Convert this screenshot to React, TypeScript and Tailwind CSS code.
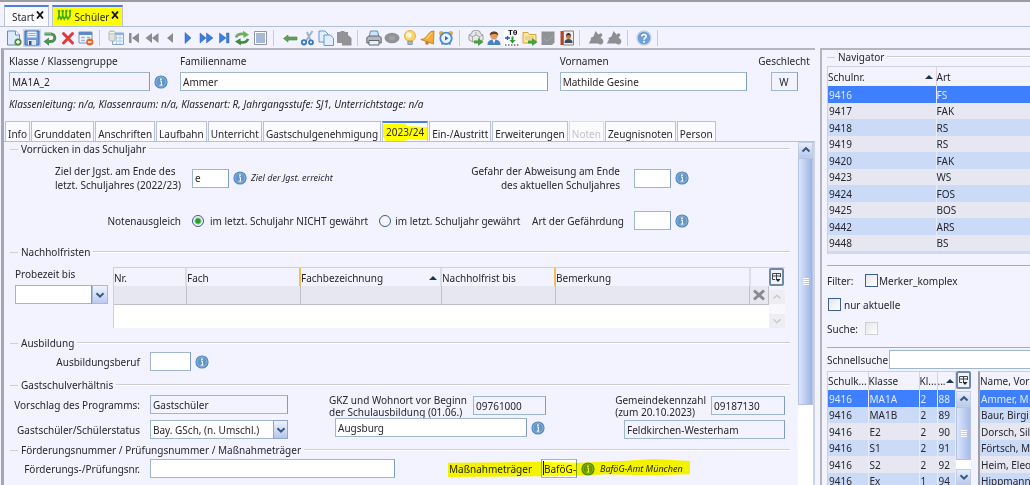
import React, { useState } from "react";

const field =
  "h-[19px] min-w-0 border border-[#9fb6d3] border-r-[#7f9cc0] px-0.5 text-[10px] leading-[14px] text-[#26262e] outline-none";

/* ---------- small shared pieces ---------- */

function InfoIcon() {
  return (
    <svg viewBox="0 0 14 14" className="size-3.5 shrink-0" aria-hidden="true">
      <circle cx="7" cy="7" r="6.6" fill="#4f86bd" />
      <circle cx="7" cy="7" r="5" fill="#6295c8" stroke="#9cc0e0" strokeWidth=".8" />
      <circle cx="7" cy="4.2" r=".9" fill="#fff" />
      <path d="M6 6h1.4v4M5.6 10.1h2.900" stroke="#fff" strokeWidth="1" fill="none" />
    </svg>
  );
}

function Chevron({ up = false, pale = false }: { up?: boolean; pale?: boolean }) {
  return (
    <svg viewBox="0 0 10 8" className="h-2 w-2.5" aria-hidden="true">
      <path
        d={up ? "M1.5 5.5 5 2.2l3.5 3.3" : "M1.5 2.2 5 5.6l3.5-3.4"}
        fill="none"
        stroke={pale ? "#c4c4cc" : "#3c5682"}
        strokeWidth={pale ? 1.2 : 2}
      />
    </svg>
  );
}

function ScrollButton({ up = false, pale = false, label }: { up?: boolean; pale?: boolean; label: string }) {
  return (
    <button
      type="button"
      aria-label={label}
      className={
        pale
          ? "flex h-3.5 w-full shrink-0 items-center justify-center bg-[#ededf2]"
          : "flex h-4 w-full shrink-0 items-center justify-center border border-[#c3cde4] bg-linear-to-b from-[#e6edfc] to-[#b9c9ee]"
      }
    >
      <Chevron up={up} pale={pale} />
    </button>
  );
}

function Grip() {
  return (
    <span className="flex w-1.5 flex-col gap-px">
      <i className="h-px bg-white" />
      <i className="h-px bg-white" />
      <i className="h-px bg-white" />
      <i className="h-px bg-white" />
    </span>
  );
}

function ColumnButton() {
  return (
    <button
      type="button"
      aria-label="Spalten wählen"
      className="flex h-[18px] w-[15px] shrink-0 items-center justify-center rounded-xs border-2 border-[#7187a6] bg-[#f1f3fb]"
    >
      <svg viewBox="0 0 11 11" className="size-[11px] shrink-0" aria-hidden="true">
        <path d="M4 7.500H1.500v-6h8V5M1.500 4h8M5.500 1.500V7" fill="none" stroke="#444" />
        <path d="M4.500 7h5L7 10z" fill="#222" />
      </svg>
    </button>
  );
}

function SortMark() {
  return (
    <svg viewBox="0 0 8 4" className="h-1 w-2 shrink-0" aria-hidden="true">
      <path d="M4 0l4 4H0z" fill="#1c3650" />
    </svg>
  );
}

function Legend({ children }: { children: React.ReactNode }) {
  return (
    <h2 className="flex h-3.5 items-center gap-[3px] whitespace-nowrap">
      <span className="h-px w-2 bg-[#cdced8]" />
      {children}
      <span className="h-0.5 flex-1 border-b border-white bg-[#cdced8]" />
    </h2>
  );
}

/* ---------- toolbar ---------- */

const icons: Record<string, React.ReactNode> = {
  Neu: (
    <>
      <path d="M1.500 1h8l4 4v10h-12z" fill="#dcebfa" stroke="#5b8fc9" />
      <path d="M9.500 1v4h4" fill="#fff" stroke="#5b8fc9" />
      <circle cx="12" cy="12" r="3.600" fill="#4d8f3c" />
      <path d="M12 10v4M10 12h4" stroke="#fff" strokeWidth="1.300" />
    </>
  ),
  Speichern: (
    <>
      <path d="M1 1h14v14H1z" fill="#6f9bd6" stroke="#41679e" />
      <path d="M3.500 1.500h9v6h-9z" fill="#e9f2fc" />
      <path d="M4.500 3.500h7M4.500 5.500h7" stroke="#8fb0da" />
      <path d="M4 10h8v5H4z" fill="#dfe5ee" />
      <path d="M5 11h2.500v4H5z" fill="#38587f" />
    </>
  ),
  Rückgängig: (
    <>
      <path d="M2.500 4h6.500a3.800 3.800 0 010 7.600H6" fill="none" stroke="#4e9152" strokeWidth="3" />
      <path d="M7 7.500v8.200L1.500 11.600z" fill="#4e9152" />
      <path d="M3 3.700h6" stroke="#8cc48c" />
    </>
  ),
  Löschen: <path d="M3.500 3.500l9 9.500M12.500 3.500L3.500 13" stroke="#e0393b" strokeWidth="3" strokeLinecap="round" />,
  "Zeile entfernen": (
    <>
      <path d="M1 2h13v11H1z" fill="#f4f8fe" stroke="#7690bb" />
      <path d="M1 2h13v3H1z" fill="#5f88c6" />
      <path d="M3 7.500h4M9 7.500h3M3 10.500h4" stroke="#9fb4d6" strokeWidth="1.500" />
      <circle cx="11.800" cy="12" r="3.600" fill="#e2672c" />
      <path d="M10 12h3.600" stroke="#fff" strokeWidth="1.400" />
    </>
  ),
  Abfrage: (
    <>
      <path d="M4.500 3h11v11.500h-11z" fill="#eef5fd" stroke="#7fa5d3" />
      <path d="M4.500 3h11v2h-11z" fill="#8fb4e0" />
      <path d="M4.500 8h11M4.500 11h11M8.500 5v9M12 5v9" stroke="#b5cdea" />
      <path d="M1 2.500C1 .5 7 .5 7 2.500v7c0 2-6 2-6 0z" fill="#e3e3dd" stroke="#aaaaa4" strokeWidth=".8" />
      <ellipse cx="4" cy="2.600" rx="3" ry="1.300" fill="#f5f5f0" stroke="#aaaaa4" strokeWidth=".6" />
    </>
  ),
  Erster: <path d="M3 3h2.500v10H3zM13 3v10L6 8z" fill="#8c8c90" />,
  "Schnell zurück": <path d="M8 3v10L1.500 8zM14.500 3v10L8 8z" fill="#8c8c90" />,
  Zurück: <path d="M11 3v10L5 8z" fill="#8c8c90" />,
  Weiter: <path d="M5 2.500v11L11 8z" fill="#3c7fdc" stroke="#2c62b8" strokeWidth=".5" />,
  "Schnell weiter": <path d="M2 3v10l6-5zM8.500 3v10L15 8z" fill="#3c7fdc" stroke="#2c62b8" strokeWidth=".5" />,
  Letzter: <path d="M3.500 3v10l6.500-5zM10.500 3H13v10h-2.500z" fill="#3c7fdc" stroke="#2c62b8" strokeWidth=".5" />,
  Aktualisieren: (
    <>
      <path d="M2 7.500C3 4.500 6 3.500 10 4" fill="none" stroke="#6bb05c" strokeWidth="2.600" />
      <path d="M9 .8l6 4L9.500 8z" fill="#6bb05c" />
      <path d="M14 8.800c-1 3-4.500 4-8 3.500" fill="none" stroke="#3f8a3c" strokeWidth="2.600" />
      <path d="M7 15.500l-6-4L6.500 8.200z" fill="#3f8a3c" />
    </>
  ),
  Liste: (
    <>
      <path d="M2.500 1.500h12v13h-12z" fill="#fff" stroke="#9296a2" />
      <path d="M4 4h9M4 6h9M4 8h9M4 10h9M4 12h9" stroke="#4f73ae" />
    </>
  ),
  "Zurück zur Liste": (
    <path d="M1.500 8.500L6 5v2h9v3H6v2z" fill="#62a455" stroke="#3f8339" strokeWidth=".6" />
  ),
  Ausschneiden: (
    <>
      <path d="M12.500 1L6 11M7 2l3.500 8.500" stroke="#9bb4d4" strokeWidth="2" />
      <circle cx="4" cy="12.300" r="2.200" fill="none" stroke="#3b78c0" strokeWidth="1.800" />
      <circle cx="11" cy="12.300" r="2" fill="none" stroke="#3b78c0" strokeWidth="1.800" />
    </>
  ),
  Kopieren: (
    <>
      <path d="M1 1h6l3 3v8H1z" fill="#e3effc" stroke="#6298d6" />
      <path d="M6 5h6l3.500 3v7.500H6z" fill="#e3effc" stroke="#6298d6" />
    </>
  ),
  Einfügen: <path d="M1 2h3l1-1h3l1 1h3v3l3.500 3v7.500H6V13H1z" fill="#939397" />,
  Drucken: (
    <>
      <path d="M4.500 1h7l1.500 6H3z" fill="#cfe4fb" stroke="#5f90cc" />
      <path d="M.8 7.500L3 6h10l2.200 1.500V13H.8z" fill="#b3b7c0" stroke="#62666f" />
      <path d="M3 10.500h10V15H3z" fill="#e6f1fd" stroke="#62666f" />
    </>
  ),
  Vorschau: (
    <>
      <ellipse cx="8" cy="8" rx="7.500" ry="5.200" fill="#929296" />
      <ellipse cx="8" cy="8" rx="3" ry="2.300" fill="#a2a2a6" />
    </>
  ),
  Hinweis: (
    <>
      <circle cx="8" cy="6" r="5.500" fill="#fbd568" stroke="#eab04a" />
      <circle cx="6.800" cy="5" r="2.800" fill="#fff6d8" />
      <path d="M5.800 11h4.500v3.500H5.800z" fill="#a9b4c4" stroke="#6f7a8c" strokeWidth=".6" />
    </>
  ),
  Glocke: (
    <>
      <path d="M14 1l-.5 13L.8 9.500C5 9 6 7 8 4.500 9.500 2.500 11 1 14 1z" fill="#efb13c" stroke="#b9771c" strokeWidth=".8" />
      <path d="M12 3c-2 .5-3.500 3-5 6" stroke="#fbdc8e" fill="none" />
      <circle cx="7" cy="13" r="1.800" fill="#c07f22" />
    </>
  ),
  Wiedervorlage: (
    <>
      <path d="M3.500 14.500l2-2M12.500 14.500l-2-2" stroke="#4678b4" strokeWidth="1.600" />
      <circle cx="3.300" cy="3.300" r="2.300" fill="#e8ad3b" />
      <circle cx="12.700" cy="3.300" r="2.300" fill="#e8ad3b" />
      <circle cx="8" cy="8.300" r="5.700" fill="#e9f4ff" stroke="#4b8bcf" strokeWidth="1.800" />
      <path d="M7 6v4.600l3.500-2.300z" fill="#2e69a9" />
    </>
  ),
  "Daten übergeben": (
    <>
      <path d="M1 5l3-2V1.500L8 0l4 1.500V3l3 2v5l-4 2-3-1-3 1-4-2z" fill="#e8e8ea" stroke="#8d8d91" strokeWidth=".8" />
      <path d="M1 5l3.500 1.500L8 5l3.500 1.500L15 5M4.500 6.500V12M8 2v3M11.500 6.500V12" fill="none" stroke="#8d8d91" strokeWidth=".7" />
      <path d="M6 10.500h4V8l5.500 4-5.500 4v-2.500H6z" fill="#4c9f3f" />
    </>
  ),
  Person: (
    <>
      <path d="M1.500 15c0-4 2.500-5.500 6.500-5.500s6.500 1.500 6.500 5.500z" fill="#4b82c2" />
      <path d="M6.500 9.500h3L8 13.500z" fill="#fff" />
      <circle cx="8" cy="5.500" r="3.800" fill="#d99a6a" />
      <path d="M3.800 5.500C3 0 13 0 12.200 5.500 10.500 3.500 6 3.500 3.800 5.500z" fill="#6e3c1e" />
    </>
  ),
  Folder: (
    <>
      <path d="M1 2.500h5l1.500 2H14V13H1z" fill="#fbe6a2" stroke="#d5a437" />
      <path d="M3 7h9M3 9h9" stroke="#e6c364" />
      <path d="M6 10.500h4V8l5.500 4-5.500 4v-2.500H6z" fill="#4c9f3f" />
    </>
  ),
  Notiz: (
    <>
      <path d="M1.500 1.500h13v11l-2.500 2.500H1.500z" fill="#929296" />
      <path d="M4 9l3 2 6-5" stroke="#a6a6aa" fill="none" />
    </>
  ),
  Adressbuch: (
    <>
      <path d="M2.500 1h3v14h-3z" fill="#b3442e" />
      <path d="M5.500 1h10v14h-10z" fill="#f0eeea" stroke="#8a8078" />
      <path d="M6.500 13c0-3 1.500-4 4-4s4 1 4 4z" fill="#3e4c60" />
      <circle cx="10.500" cy="6.500" r="2.500" fill="#b87850" />
      <path d="M8 6c0-4 5-4 5 0-1.500-1.500-3.500-1.500-5 0z" fill="#3b2618" />
    </>
  ),
  Formen: (
    <path
      d="M7.500 1l3 3.500L13 3l1.500 2-2 3c2 .5 3 2 2.800 4-.3 2.500-3.500 3.500-5.300 1.500H.8L3 9.500 2.500 8l3-1.500z"
      fill="#8f8f93"
    />
  ),
  Hilfe: (
    <>
      <circle cx="8" cy="8" r="7" fill="#6e9fd6" stroke="#c3d1e4" strokeWidth="1.400" />
      <path d="M5.800 6.500C6 3.800 10.300 4 10.200 6.500 10.100 8 8 8 8 9.700" fill="none" stroke="#fff" strokeWidth="1.600" />
      <circle cx="8" cy="11.700" r="1" fill="#fff" />
    </>
  ),
};

function ToolIcon({ name }: { name: string }) {
  if (name === "T0") {
    return (
      <span className="relative block size-4 bg-white">
        <span className="absolute -top-0.5 left-1 font-['Liberation_Mono',monospace] text-[8px] leading-[9px] font-bold text-black">
          T0
        </span>
        <svg viewBox="0 0 16 16" className="size-4" aria-hidden="true">
          <path d="M1 8h5M3.500 6v4" stroke="#2557c8" strokeWidth="1.400" />
          <path d="M7.500 6.500v3.500H5.500L8.500 13.500 11.500 10h-2V6.500z" fill="#2c9b36" />
          <path d="M1 15h14" stroke="#222" strokeDasharray="1.500 1.500" />
        </svg>
      </span>
    );
  }
  return (
    <svg viewBox="0 0 16 16" className="size-4" aria-hidden="true">
      {icons[name]}
    </svg>
  );
}

const toolGroups: string[][] = [
  ["Neu", "Speichern", "Rückgängig", "Löschen", "Zeile entfernen"],
  ["Abfrage", "Erster", "Schnell zurück", "Zurück", "Weiter", "Schnell weiter", "Letzter", "Aktualisieren", "Liste"],
  ["Zurück zur Liste", "Ausschneiden", "Kopieren", "Einfügen"],
  ["Drucken", "Vorschau", "Hinweis", "Glocke", "Wiedervorlage"],
  ["Daten übergeben", "Person", "T0", "Folder", "Notiz", "Adressbuch"],
  ["Formen", "Formen"],
  ["Hilfe"],
];

function Toolbar() {
  return (
    <div role="toolbar" className="flex h-[21px] shrink-0 items-center pl-[5px]">
      {toolGroups.map((group, g) => (
        <React.Fragment key={g}>
          {group.map((name, i) => (
            <button
              key={i}
              type="button"
              aria-label={name}
              className={
                name === "Speichern"
                  ? "flex h-[18px] w-[18px] items-center justify-center bg-[#c9d8f2]"
                  : "flex h-[18px] w-[18px] items-center justify-center"
              }
            >
              <ToolIcon name={name} />
            </button>
          ))}
          <span className="mr-[7px] ml-1 h-4 w-px bg-[#c9cad6]" />
        </React.Fragment>
      ))}
    </div>
  );
}

/* ---------- window tabs ---------- */

function CloseMark() {
  return (
    <svg viewBox="0 0 8 8" className="mb-1 size-2" aria-hidden="true">
      <path d="M1 .5l6 7M7 .5l-6 7" stroke="#111" strokeWidth="1.800" />
    </svg>
  );
}

function WindowTabs() {
  return (
    <div className="flex h-[22px] shrink-0 items-end gap-[3px] border-b border-[#b3c0da] pl-1">
      <div className="flex h-[21px] items-center gap-0.5 border-x border-t-2 border-x-[#b9c4da] border-t-[#4a7fdc] bg-[#fbfbff] pr-1 pl-[7px]">
        <button type="button">Start</button>
        <button type="button" aria-label="Start schließen">
          <CloseMark />
        </button>
      </div>
      <div className="flex h-[21px] items-center gap-0.5 border-x border-t-2 border-x-[#b9c4da] border-t-[#4a7fdc] bg-[#ff0] pr-[3px] pl-1">
        <svg viewBox="0 0 15 12" className="mb-1 h-3 w-[15px]" aria-hidden="true">
          <path
            d="M2 3v4.500L.8 10.500M2.300 7l1.700 3 1.700-3V3M5.700 7l1.600 3 1.900-3V3M9.200 7l1.600 3L13 7V3"
            fill="none"
            stroke="#3cae1c"
            strokeWidth="1.700"
          />
          <g fill="#3cae1c">
            <circle cx="2" cy="2" r="1.300" />
            <circle cx="5.700" cy="2" r="1.300" />
            <circle cx="9.300" cy="2" r="1.300" />
            <circle cx="13" cy="2" r="1.300" />
          </g>
        </svg>
        <button type="button">Schüler</button>
        <button type="button" aria-label="Schüler schließen">
          <CloseMark />
        </button>
      </div>
    </div>
  );
}

/* ---------- pupil header ---------- */

function PupilHeader() {
  return (
    <div className="px-[5px] pt-1">
      <div className="flex items-end">
        <div className="flex w-[141px] flex-col gap-1">
          <label htmlFor="klasse">Klasse / Klassengruppe</label>
          <input id="klasse" readOnly defaultValue="MA1A_2" className={`${field} bg-[#f3f3ff]`} />
        </div>
        <span className="mx-1 mb-0.5">
          <InfoIcon />
        </span>
        <div className="ml-2 flex min-w-0 flex-[367] flex-col gap-1">
          <label htmlFor="nachname">Familienname</label>
          <input id="nachname" defaultValue="Ammer" className={`${field} bg-white`} />
        </div>
        <div className="ml-3 flex min-w-0 flex-[187] flex-col gap-1">
          <label htmlFor="vornamen">Vornamen</label>
          <input id="vornamen" defaultValue="Mathilde Gesine" className={`${field} bg-white`} />
        </div>
        <div className="mr-px ml-3 flex w-[50px] flex-col items-center gap-1">
          <label htmlFor="geschlecht">Geschlecht</label>
          <input id="geschlecht" readOnly defaultValue="W" className={`${field} w-[27px] bg-[#f3f3ff] text-center`} />
        </div>
      </div>
      <p className="mt-1.5 italic">
        Klassenleitung: n/a, Klassenraum: n/a, Klassenart: R, Jahrgangsstufe: SJ1, Unterrichtstage: n/a
      </p>
    </div>
  );
}

const tabs = [
  "Info",
  "Grunddaten",
  "Anschriften",
  "Laufbahn",
  "Unterricht",
  "Gastschulgenehmigung",
  "2023/24",
  "Ein-/Austritt",
  "Erweiterungen",
  "Noten",
  "Zeugnisnoten",
  "Person",
];

function DetailTabs() {
  return (
    <div role="tablist" className="mt-2.5 flex h-[21px] gap-px border-b border-[#b3c0da] pl-px whitespace-nowrap">
      {tabs.map((t) =>
        t === "2023/24" ? (
          <button
            key={t}
            type="button"
            role="tab"
            aria-selected="true"
            className="relative border-x border-t-2 border-x-[#c3cbe0] border-t-[#4a7fdc] bg-[#fbfbff] px-[3px]"
          >
            <svg viewBox="0 0 44 18" preserveAspectRatio="none" className="absolute inset-0 size-full" aria-hidden="true">
              <path d="M0 1L22 0 24 3 44 4V17L26 16 22 18H3L0 14z" fill="#ff0" />
            </svg>
            <span className="relative">{t}</span>
          </button>
        ) : (
          <button
            key={t}
            type="button"
            role="tab"
            disabled={t === "Noten"}
            className="border border-b-0 border-[#b7c2d9] bg-[#fbfbff] px-0.5 pt-1 disabled:border-[#dcdfeb] disabled:text-[#c2c2cc]"
          >
            {t}
          </button>
        ),
      )}
    </div>
  );
}

/* ---------- year form ---------- */

function Radio({ id, checked, onChange }: { id: string; checked: boolean; onChange: () => void }) {
  return (
    <input
      type="radio"
      name="ausgleich"
      id={id}
      checked={checked}
      onChange={onChange}
      className="size-3 shrink-0 appearance-none rounded-full border border-[#3b5a8c] bg-[#f4f5f8] checked:bg-[radial-gradient(circle,#1fa01f_0_2px,#f4f5f8_4px)]"
    />
  );
}

function ProgressSection() {
  const [granted, setGranted] = useState(false);
  return (
    <section>
      <Legend>Vorrücken in das Schuljahr</Legend>
      <div className="mt-2 flex h-7 items-center">
        <div className="flex w-[171px] shrink-0 justify-end">
          <label htmlFor="ziel">
            Ziel der Jgst. am Ende des
            <br />
            letzt. Schuljahres (2022/23)
          </label>
        </div>
        <input id="ziel" defaultValue="e" className={`${field} mr-1 ml-[11px] w-[37px] bg-white`} />
        <InfoIcon />
        <em className="ml-1 text-[9px]">Ziel der Jgst. erreicht</em>
        <label htmlFor="gefahr" className="mr-3.5 ml-auto text-right">
          Gefahr der Abweisung am Ende
          <br />
          des aktuellen Schuljahres
        </label>
        <input id="gefahr" className={`${field} mr-1 w-[37px] bg-white`} />
        <span className="mr-[101px]">
          <InfoIcon />
        </span>
      </div>
      <div className="mt-[19px] flex h-[19px] items-center">
        <span className="w-[171px] shrink-0 text-right">Notenausgleich</span>
        <span className="ml-[11px] flex items-center gap-1.5">
          <Radio id="nichtGewaehrt" checked={!granted} onChange={() => setGranted(false)} />
          <label htmlFor="nichtGewaehrt">im letzt. Schuljahr NICHT gewährt</label>
        </span>
        <span className="ml-[11px] flex items-center gap-1">
          <Radio id="gewaehrt" checked={granted} onChange={() => setGranted(true)} />
          <label htmlFor="gewaehrt">im letzt. Schuljahr gewährt</label>
        </span>
        <label htmlFor="art" className="mr-2.5 ml-auto">
          Art der Gefährdung
        </label>
        <input id="art" className={`${field} mr-1 w-[37px] bg-white`} />
        <span className="mr-[101px]">
          <InfoIcon />
        </span>
      </div>
    </section>
  );
}

function DeadlineSection() {
  const head = "h-[18px] border-l-2 border-[#dcdde6] p-0 pt-0.5 font-normal";
  const marked = "h-[18px] border-l-2 border-[#f2bf55] p-0 pt-0.5 font-normal";
  const cell = "h-[18px] border-r border-b border-[#bfc0ca] p-0";
  return (
    <section className="mt-[15px]">
      <Legend>Nachholfristen</Legend>
      <div className="mt-2 flex">
        <div className="ml-[5px] flex w-[93px] shrink-0 flex-col gap-1">
          <label htmlFor="probezeit">Probezeit bis</label>
          <div className="flex">
            <input id="probezeit" className={`${field} flex-1 bg-white`} />
            <button
              type="button"
              aria-label="Kalender öffnen"
              className="flex h-[19px] w-4 items-center justify-center border border-[#a9bad8] bg-linear-to-b from-[#eef2fd] to-[#bccbee]"
            >
              <Chevron />
            </button>
          </div>
        </div>
        <div className="ml-[5px] h-[61px] flex-1 border-t border-l border-[#cfd0da] bg-white">
          <table className="w-full table-fixed border-collapse text-left">
            <thead className="bg-[#f3f3ff]">
              <tr>
                <th className="h-[18px] w-[72px] p-0 pt-0.5 font-normal">Nr.</th>
                <th className={`${head} w-[114px]`}>Fach</th>
                <th className={`${marked} w-[141px]`}>
                  <span className="flex items-center justify-between pr-[3px]">
                    Fachbezeichnung
                    <SortMark />
                  </span>
                </th>
                <th className={`${head} w-[114px]`}>Nachholfrist bis</th>
                <th className={marked}>Bemerkung</th>
                <th className={`${head} w-[19px]`} aria-label="Aktion" />
              </tr>
            </thead>
            <tbody className="bg-[#e7e7f1]">
              <tr>
                <td className={cell} />
                <td className={cell} />
                <td className={cell} />
                <td className={cell} />
                <td className={cell} />
                <td className={cell}>
                  <button type="button" aria-label="Zeile löschen" className="flex h-4 w-full items-center justify-center">
                    <svg viewBox="0 0 12 12" className="size-3" aria-hidden="true">
                      <path d="M1 1.500l10 9M11 1.500l-10 9" stroke="#8a8a8e" strokeWidth="3" />
                    </svg>
                  </button>
                </td>
              </tr>
            </tbody>
          </table>
        </div>
        <div className="mr-[5px] flex h-[61px] w-4 shrink-0 flex-col border-t border-[#cfd0da]">
          <ColumnButton />
          <div className="mt-1 flex flex-1 flex-col justify-between bg-[#f8f8fc]">
            <ScrollButton up pale label="Nach oben" />
            <ScrollButton pale label="Nach unten" />
          </div>
        </div>
      </div>
    </section>
  );
}

function TrainingSection() {
  return (
    <section className="mt-2">
      <Legend>Ausbildung</Legend>
      <div className="mt-0.5 flex items-center">
        <label htmlFor="beruf" className="w-[130px] text-right">
          Ausbildungsberuf
        </label>
        <input id="beruf" className={`${field} mr-1 ml-2.5 w-[41px] bg-white`} />
        <InfoIcon />
      </div>
    </section>
  );
}

function GuestSection() {
  return (
    <section className="mt-[7px]">
      <Legend>Gastschulverhältnis</Legend>
      <div className="flex pr-[5px]">
        <div className="flex flex-col gap-1.5 pt-[3px]">
          <div className="flex items-center gap-2.5">
            <label htmlFor="vorschlag" className="w-[130px] text-right whitespace-nowrap">
              Vorschlag des Programms:
            </label>
            <input id="vorschlag" readOnly defaultValue="Gastschüler" className={`${field} w-[138px] bg-[#f3f3ff]`} />
          </div>
          <div className="flex items-center gap-2.5">
            <label htmlFor="status" className="w-[130px] text-right whitespace-nowrap">
              Gastschüler/Schülerstatus
            </label>
            <div className="relative">
              <select id="status" className={`${field} block w-[138px] appearance-none bg-white`}>
                <option>Bay. GSch, (n. Umschl.)</option>
              </select>
              <span className="pointer-events-none absolute inset-y-0 right-0 flex w-[15px] items-center justify-center border border-[#8fa6cc] bg-linear-to-b from-[#eef2fd] to-[#b5c5ec]">
                <Chevron />
              </span>
            </div>
          </div>
        </div>
        <div className="ml-[41px] flex flex-col pt-0.5">
          <div className="flex gap-1">
            <label htmlFor="gkz" className="w-[140px] leading-3 whitespace-nowrap">
              GKZ und Wohnort vor Beginn
              <br />
              der Schulausbildung (01.06.)
            </label>
            <input id="gkz" readOnly defaultValue="09761000" className={`${field} mt-0.5 w-[73px] bg-[#f3f3ff]`} />
          </div>
          <div className="ml-1.5 flex items-center gap-1">
            <input aria-label="Wohnort" defaultValue="Augsburg" className={`${field} w-[192px] bg-white`} />
            <InfoIcon />
          </div>
        </div>
        <div className="ml-auto flex flex-col pt-0.5">
          <div className="flex justify-end gap-[5px]">
            <label htmlFor="kennzahl" className="leading-3 whitespace-nowrap">
              Gemeindekennzahl
              <br />
              (zum 20.10.2023)
            </label>
            <input id="kennzahl" readOnly defaultValue="09187130" className={`${field} mt-0.5 w-[74px] bg-[#f3f3ff]`} />
          </div>
          <input
            aria-label="Gemeinde"
            readOnly
            defaultValue="Feldkirchen-Westerham"
            className={`${field} mt-0.5 w-[161px] self-end bg-[#f3f3ff]`}
          />
        </div>
      </div>
    </section>
  );
}

function FundingSection() {
  return (
    <section className="mt-1">
      <Legend>Förderungsnummer / Prüfungsnummer / Maßnahmeträger</Legend>
      <div className="mt-0.5 flex items-center">
        <label htmlFor="nummer" className="w-[130px] text-right">
          Förderungs-/Prüfungsnr.
        </label>
        <input id="nummer" className={`${field} ml-2.5 w-[245px] bg-white`} />
        <div className="relative mr-[100px] ml-auto flex w-[242px] items-center">
          <label htmlFor="traeger" className="w-[93px] pl-px">
            Maßnahmeträger
          </label>
          <span className="relative mr-1 flex">
            <input id="traeger" defaultValue="BaföG-" className={`${field} w-9 bg-white pr-0`} />
            <i className="absolute top-0.5 left-0.5 h-3.5 w-px bg-black" />
          </span>
          <InfoIcon />
          <em className="ml-[5px] text-[9px] whitespace-nowrap">BaföG-Amt München</em>
          <svg
            viewBox="0 0 242 20"
            preserveAspectRatio="none"
            className="pointer-events-none absolute inset-0 size-full mix-blend-multiply"
            aria-hidden="true"
          >
            <path d="M0 4L92 3 130 4 175 2 205 0 242 2V16L200 17 160 16 120 18 0 19z" fill="#ffff00" />
          </svg>
        </div>
      </div>
    </section>
  );
}

/* ---------- navigator ---------- */

const schools = [
  ["9416", "FS"],
  ["9417", "FAK"],
  ["9418", "RS"],
  ["9419", "RS"],
  ["9420", "FAK"],
  ["9423", "WS"],
  ["9424", "FOS"],
  ["9425", "BOS"],
  ["9442", "ARS"],
  ["9448", "BS"],
];

const classes = [
  ["9416", "MA1A", "2", "88"],
  ["9416", "MA1B", "2", "89"],
  ["9416", "E2", "2", "90"],
  ["9416", "S1", "2", "91"],
  ["9416", "S2", "2", "92"],
  ["9416", "Ex", "1", "94"],
];

const pupils = ["Ammer, M", "Baur, Birgi", "Dorsch, Sil", "Förtsch, M", "Heim, Eleo", "Hippmann"];

function rowColour(i: number, blueOnEven: boolean) {
  if (i === 0) return "bg-[#3e7fff] text-[#dfe9ff]";
  return (i % 2 === 0) === blueOnEven ? "bg-[#cbdaf7]" : "bg-[#e7e7f1]";
}

function rowHeight(i: number) {
  return i % 2 === 0 ? "h-[17px]" : "h-4";
}

function CheckBox({ id, disabled = false }: { id: string; disabled?: boolean }) {
  return (
    <input
      type="checkbox"
      id={id}
      disabled={disabled}
      className="size-[13px] appearance-none border border-[#3d5f96] bg-linear-to-br from-[#e6e6ea] to-white checked:bg-[#3e7fff] disabled:border-[#cfcfd6]"
    />
  );
}

function Navigator() {
  const cell = "border-r border-[#e9ecf8] p-0 pl-px";
  const head = "h-[18px] border-r border-[#d3d4de] p-0 font-normal whitespace-nowrap";
  return (
    <aside className="flex w-[210px] shrink-0 flex-col overflow-hidden border-t-2 border-l-2 border-[#b4b5bf] pl-[5px]">
      <Legend>Navigator</Legend>
      <div className="mt-0.5 border-t border-l border-[#cfd0da]">
        <table className="w-full table-fixed border-collapse text-left">
          <thead>
            <tr>
              <th className="h-[19px] w-[108px] border-r border-[#d3d4de] p-0 font-normal">
                <span className="flex items-center justify-between pr-[3px]">
                  Schulnr.
                  <SortMark />
                </span>
              </th>
              <th className="p-0 font-normal">Art</th>
            </tr>
          </thead>
          <tbody>
            {schools.map(([nr, art], i) => (
              <tr key={nr} className={`${rowColour(i, true)} ${rowHeight(i)}`}>
                <td className={cell}>{nr}</td>
                <td className="p-0">{art}</td>
              </tr>
            ))}
          </tbody>
        </table>
        <div className="h-[3px] bg-[#cbdaf7]" />
      </div>

      <div className="mt-[11px] flex flex-col gap-[11px] border-y border-[#a9aab4] pt-2 pb-3">
        <div className="flex h-[13px] items-center">
          <span className="w-[38px]">Filter:</span>
          <CheckBox id="merker" />
          <label htmlFor="merker" className="ml-px">
            Merker_komplex
          </label>
        </div>
        <div className="flex h-[13px] items-center pl-px">
          <CheckBox id="aktuelle" />
          <label htmlFor="aktuelle" className="ml-[3px]">
            nur aktuelle
          </label>
        </div>
        <div className="flex h-[13px] items-center">
          <label htmlFor="suche" className="w-[38px]">
            Suche:
          </label>
          <CheckBox id="suche" disabled />
        </div>
      </div>

      <div className="mt-0.5 flex items-center gap-px">
        <label htmlFor="schnell">Schnellsuche</label>
        <input id="schnell" className={`${field} flex-1 border-r-0 bg-white`} />
      </div>

      <div className="mt-0.5 flex min-h-0 flex-1 overflow-hidden">
        <div className="w-[129px] shrink-0 border-t border-l border-[#cfd0da]">
          <table className="w-full table-fixed border-collapse text-left">
            <thead>
              <tr>
                <th className={`${head} w-10`}>Schulk...</th>
                <th className={`${head} w-[51px]`}>Klasse</th>
                <th className={`${head} w-[18px]`}>Kl...</th>
                <th className={head}>
                  <span className="flex items-center">
                    ...
                    <SortMark />
                  </span>
                </th>
              </tr>
            </thead>
            <tbody>
              {classes.map((row, i) => (
                <tr key={i} className={`${rowColour(i, false)} ${rowHeight(i)}`}>
                  {row.map((v, j) => (
                    <td key={j} className={cell}>
                      {v}
                    </td>
                  ))}
                </tr>
              ))}
            </tbody>
          </table>
        </div>
        <div className="flex w-[15px] shrink-0 flex-col">
          <ColumnButton />
          <div className="mt-0.5 flex flex-1 flex-col bg-white">
            <ScrollButton up label="Klassen nach oben" />
            <div className="flex h-[53px] items-center justify-center border border-[#b4c3e4] bg-linear-to-r from-[#dbe5fb] to-[#a9bce8]">
              <Grip />
            </div>
            <div className="flex-1" />
            <ScrollButton label="Klassen nach unten" />
          </div>
        </div>
        <div className="ml-[7px] min-w-0 flex-1 overflow-hidden border-t border-l-2 border-t-[#cfd0da] border-l-[#9d9ea8]">
          <table className="w-full border-collapse text-left whitespace-nowrap">
            <thead>
              <tr>
                <th className="h-[18px] p-0 font-normal">Name, Vor</th>
              </tr>
            </thead>
            <tbody>
              {pupils.map((name, i) => (
                <tr key={name} className={`${rowColour(i, false)} ${rowHeight(i)}`}>
                  <td className="p-0 pl-px">{name}</td>
                </tr>
              ))}
            </tbody>
          </table>
        </div>
      </div>
    </aside>
  );
}

export default function App() {
  return (
    <div className="flex h-screen flex-col overflow-hidden border-t-2 border-[#9c9ca2] bg-[#f3f3ff] pt-[3px] font-['Noto_Sans','Open_Sans',sans-serif] text-[10px] leading-[14px] text-[#26262e]">
      <WindowTabs />
      <Toolbar />
      <div className="flex min-h-0 flex-1 gap-[5px] pl-px">
        <main className="flex min-w-0 flex-1 flex-col overflow-hidden border-t-2 border-l-[3px] border-t-[#b4b5bf] border-l-[#a3a6b5]">
          <PupilHeader />
          <DetailTabs />
          <div className="flex min-h-0 flex-1">
            <div className="min-w-0 flex-1 overflow-hidden pr-2 pl-1.5">
              <ProgressSection />
              <DeadlineSection />
              <TrainingSection />
              <GuestSection />
              <FundingSection />
            </div>
            <div className="flex w-[17px] shrink-0 flex-col border-r-2 border-[#cdd3e4] bg-white">
              <ScrollButton up label="Formular nach oben" />
              <div className="flex h-[247px] items-center justify-center border border-[#b4c3e4] bg-linear-to-r from-[#dbe5fb] to-[#9fb4e4]">
                <Grip />
              </div>
            </div>
          </div>
        </main>
        <Navigator />
      </div>
    </div>
  );
}
